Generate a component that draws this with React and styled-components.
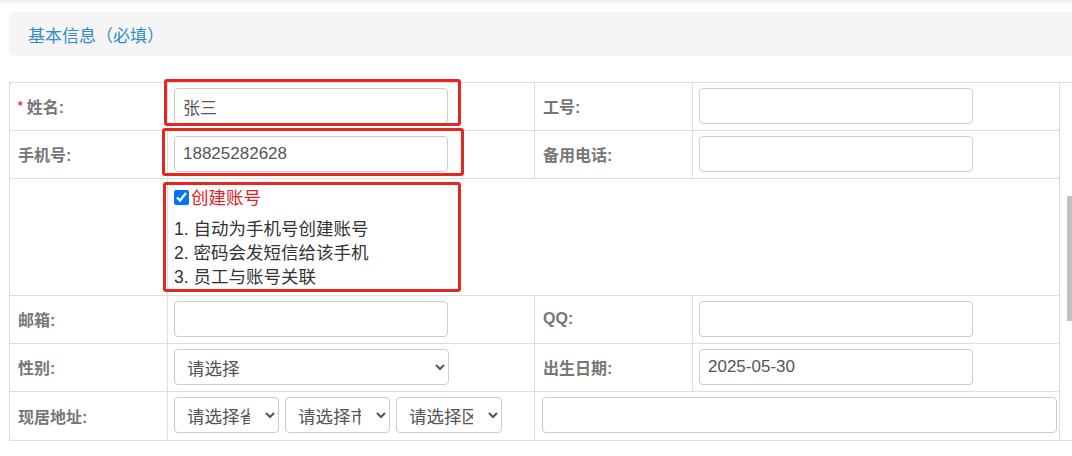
import React from 'react'
import styled, {createGlobalStyle} from 'styled-components'

const Global=createGlobalStyle`
  html,body{margin:0;padding:0;background:#fff;overflow:hidden;}
  body{font-family:"Liberation Sans","Noto Sans CJK SC",sans-serif;color:#333;}
`

const Page=styled.div`
  position:relative;
  width:1100px;
  height:456px;
  padding-top:12px;
  box-sizing:border-box;
  &::before{
    content:'';
    position:absolute;
    left:0;right:0;top:0;
    height:5px;
    background:linear-gradient(#ececec,#fff);
  }
`

const Heading=styled.div`
  margin-left:9px;
  height:44px;
  display:flex;
  align-items:center;
  padding-left:19px;
  background:#f5f5f5;
  border-radius:5px 0 0 5px;
  color:#2d8ccb;
  font-size:17px;
  font-family:"Noto Sans CJK SC",sans-serif;
`

const Box=styled.div`
  margin:26px 0 0 9px;
  border:1px solid #ddd;
  border-right:none;
  border-radius:4px 0 0 4px;
`

const Table=styled.table`
  width:1050px;
  border-collapse:collapse;
  table-layout:fixed;
  margin-top:-1px;
  margin-bottom:-1px;
  margin-left:-1px;
`

const Row=styled.tr`
  border-top:1px solid #ddd;
  border-bottom:1px solid #ddd;
`

const Label=styled.td`
  width:${p=>p.w}px;
  padding:5px 8px 6px;
  border-left:1px solid #ddd;
  border-right:1px solid #ddd;
  font-size:16px;
  font-weight:bold;
  color:#777;
  font-family:"Liberation Sans","Noto Sans CJK SC",sans-serif;
  vertical-align:middle;
  box-sizing:border-box;
`

const Cell=styled.td`
  width:${p=>p.w?p.w+'px':'auto'};
  padding:5px 6px ${p=>p.last?7:6}px ${p=>p.pl||6}px;
  border-left:1px solid #ddd;
  border-right:1px solid #ddd;
  vertical-align:middle;
  box-sizing:border-box;
`

const Star=styled.span`
  color:#e4393c;
  font-size:12px;
  margin-right:4px;
  vertical-align:3px;
`

const Input=styled.input`
  display:block;
  box-sizing:border-box;
  width:${p=>p.w||274}px;
  height:36px;
  padding:0 8px;
  border:1px solid #ccc;
  border-radius:4px;
  font-size:17px;
  color:#555;
  font-family:"Liberation Sans","Noto Sans CJK SC",sans-serif;
  outline:none;
  background:#fff;
`

const Select=styled.select`
  box-sizing:border-box;
  width:${p=>p.w}px;
  height:36px;
  padding:0 12px 0 8px;
  border:1px solid #ccc;
  border-radius:4px;
  font-size:17.5px;
  color:#555;
  background:#fff;
  font-family:"Noto Sans CJK SC",sans-serif;
  outline:none;
`

const Selects=styled.div`
  display:flex;
  gap:6px;
`

const Check=styled.label`
  display:flex;
  align-items:center;
  height:25px;
  color:#e02222;
  font-size:17.5px;
  font-family:"Noto Sans CJK SC",sans-serif;
  input{
    width:15px;
    height:15px;
    margin:1px 2px 0 0;
  }
`

const Notes=styled.div`
  margin-top:8px;
  font-size:17.5px;
  line-height:24px;
  color:#333;
  font-family:"Liberation Sans","Noto Sans CJK SC",sans-serif;
`

const Mark=styled.div`
  position:absolute;
  left:${p=>p.x}px;
  top:${p=>p.y}px;
  width:${p=>p.w}px;
  height:${p=>p.h}px;
  box-sizing:border-box;
  border:3px solid #e8251f;
  border-radius:3px;
  pointer-events:none;
`

const Thumb=styled.div`
  position:absolute;
  left:1067px;
  top:196px;
  width:5px;
  height:125px;
  background:#c1c1c1;
`

export default
()=>
<Page>
  <Global/>
  <Heading>基本信息（必填）</Heading>
  <Box>
    <Table>
      <tbody>
        <Row>
          <Label w={158}><Star>*</Star>姓名:</Label>
          <Cell w={367}><Input defaultValue='张三'/></Cell>
          <Label w={158}>工号:</Label>
          <Cell w={367}><Input/></Cell>
        </Row>
        <Row>
          <Label>手机号:</Label>
          <Cell><Input defaultValue='18825282628'/></Cell>
          <Label>备用电话:</Label>
          <Cell><Input/></Cell>
        </Row>
        <Row>
          <Label></Label>
          <Cell colSpan={3}>
            <Check><input type='checkbox' defaultChecked/>创建账号</Check>
            <Notes>
              <div>1. 自动为手机号创建账号</div>
              <div>2. 密码会发短信给该手机</div>
              <div>3. 员工与账号关联</div>
            </Notes>
          </Cell>
        </Row>
        <Row>
          <Label>邮箱:</Label>
          <Cell><Input/></Cell>
          <Label>QQ:</Label>
          <Cell><Input/></Cell>
        </Row>
        <Row>
          <Label>性别:</Label>
          <Cell><Select w={275}><option>请选择</option></Select></Cell>
          <Label>出生日期:</Label>
          <Cell><Input defaultValue='2025-05-30'/></Cell>
        </Row>
        <Row>
          <Label>现居地址:</Label>
          <Cell last>
            <Selects>
              <Select w={105}><option>请选择省</option></Select>
              <Select w={105}><option>请选择市</option></Select>
              <Select w={106}><option>请选择区</option></Select>
            </Selects>
          </Cell>
          <Cell colSpan={2} pl={7} last><Input w={515}/></Cell>
        </Row>
      </tbody>
    </Table>
  </Box>
  <Mark x={164} y={79} w={297} h={47}/>
  <Mark x={162} y={128} w={302} h={48}/>
  <Mark x={163} y={182} w={298} h={110}/>
  <Thumb/>
</Page>
